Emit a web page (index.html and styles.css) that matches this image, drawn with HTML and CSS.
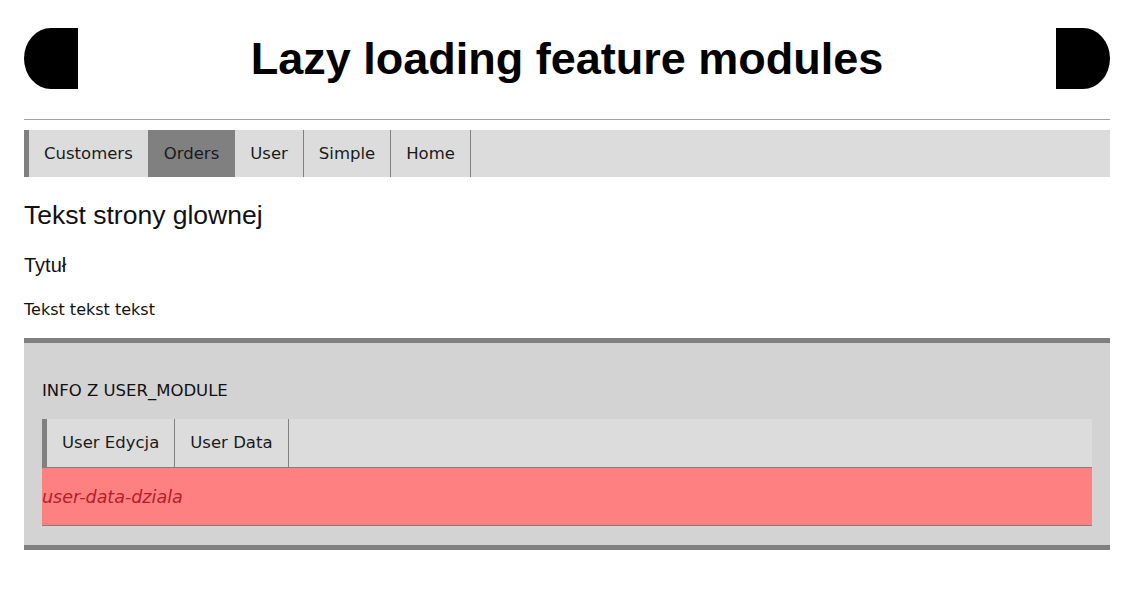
FILE: index.html
```html
<!DOCTYPE html>
<html lang="pl">
<head>
<meta charset="utf-8">
<title>Lazy loading feature modules</title>
<link rel="stylesheet" href="styles.css">
</head>
<body>
<div class="page">
  <header class="header">
    <div class="cap cap-left"></div>
    <h1 class="title">Lazy loading feature modules</h1>
    <div class="cap cap-right"></div>
  </header>
  <hr class="rule">
  <nav class="nav">
    <a class="tab">Customers</a>
    <a class="tab active">Orders</a>
    <a class="tab">User</a>
    <a class="tab">Simple</a>
    <a class="tab">Home</a>
  </nav>
  <h2 class="home-title">Tekst strony glownej</h2>
  <h3 class="sub-title">Tytuł</h3>
  <p class="text">Tekst tekst tekst</p>
  <section class="info">
    <p class="info-label">INFO Z USER_MODULE</p>
    <nav class="nav sub-nav">
      <a class="tab">User Edycja</a>
      <a class="tab">User Data</a>
    </nav>
    <div class="alert">user-data-dziala</div>
  </section>
</div>
</body>
</html>
```

FILE: styles.css
```css
* { box-sizing: border-box; }

html, body {
  margin: 0;
  padding: 0;
  background: #ffffff;
}

body {
  font-family: "DejaVu Sans", Verdana, sans-serif;
  font-size: 16.5px;
  color: #111;
}

.page {
  width: 1086px;
  margin-left: 24px;
  padding-top: 28px;
}

.header {
  display: flex;
  align-items: center;
  justify-content: space-between;
  height: 61px;
}

.cap {
  width: 54px;
  height: 61px;
  background: #000;
}

.cap-left { border-radius: 50% 0 0 50%; }
.cap-right { border-radius: 0 50% 50% 0; }

.title {
  margin: 0;
  font-family: "Liberation Sans", Arial, sans-serif;
  font-weight: bold;
  font-size: 45px;
  line-height: 52px;
  color: #000;
}

.rule {
  margin: 30px 0 0;
  border: 0;
  border-top: 1px solid #a0a0a0;
  height: 0;
}

.nav {
  display: flex;
  margin-top: 10px;
  height: 47px;
  background: #dcdcdc;
  border-left: 5px solid #808080;
}

.tab {
  display: block;
  padding: 0 15px;
  line-height: 47px;
  border-right: 1px solid #808080;
  color: #1a1a1a;
  text-decoration: none;
  white-space: nowrap;
}

.tab.active {
  background: #808080;
}

.home-title {
  margin: 23px 0 0;
  font-family: "Liberation Sans", Arial, sans-serif;
  font-weight: normal;
  font-size: 26.5px;
  line-height: 30px;
}

.sub-title {
  margin: 23px 0 0;
  font-family: "Liberation Sans", Arial, sans-serif;
  font-weight: normal;
  font-size: 20px;
  line-height: 24px;
}

.text {
  margin: 23px 0 0;
  font-size: 16px;
  line-height: 20px;
}

.info {
  margin-top: 18px;
  background: #d3d3d3;
  border-top: 5px solid #808080;
  border-bottom: 5px solid #808080;
  padding: 38px 18px 19px;
}

.info-label {
  margin: 0;
  line-height: 20px;
  font-size: 16.5px;
}

.sub-nav {
  margin-top: 18px;
  height: 48px;
}

.sub-nav .tab {
  line-height: 48px;
}

.alert {
  height: 59px;
  display: flex;
  align-items: center;
  background: #ff8080;
  border-top: 1px solid #808080;
  border-bottom: 1px solid #808080;
  color: #b3202a;
  font-style: italic;
  font-size: 17.5px;
}
```
